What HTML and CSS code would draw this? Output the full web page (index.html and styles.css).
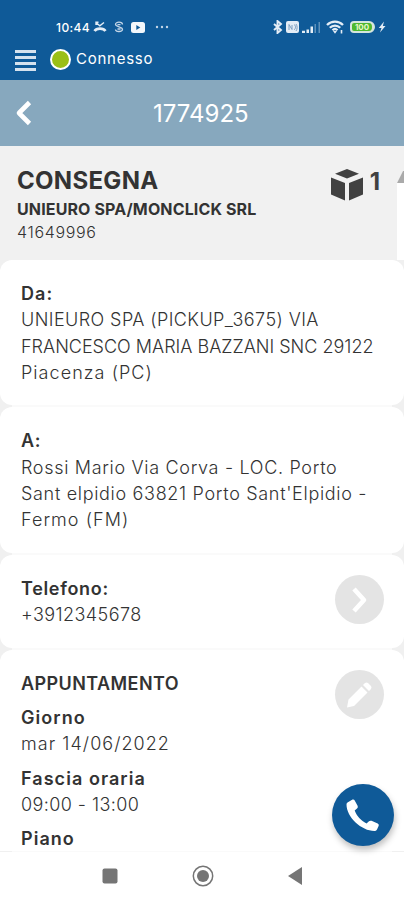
FILE: index.html
```
<!DOCTYPE html>
<html lang="it">
<head>
  <meta charset="UTF-8">
  <meta name="viewport" content="width=device-width, initial-scale=1.0">
  <title>Consegna 1774925</title>
  <link rel="stylesheet" href="styles.css">
</head>
<body>
  <div class="app">
    <header class="topbar">
      <div class="status">
        <span class="clock">10:44</span>
        <svg class="missed" width="14" height="12" viewBox="0 0 14 12" fill="none" stroke="#e4edf6" stroke-width="1.4">
          <path d="M3 1.500l3.800 3.300L11 1.500M3 4V1.300h2.500"/>
          <path d="M1.500 10C3.500 6.800 10.500 6.800 12.500 10" stroke-width="2.600"/>
        </svg>
        <svg class="sim" width="10" height="12" viewBox="0 0 10 12" fill="none" stroke="#c3d5e7" stroke-width="1.300">
          <path d="M8.500 3.500C8.500.5 1.500.5 1.500 3.300S8.500 5.500 8.500 8.200 1.500 11.500 1.500 8.500M3.500 3.700h3M3.500 8h3"/>
        </svg>
        <svg class="video" width="14" height="11" viewBox="0 0 14 11">
          <rect width="14" height="11" rx="2.500" fill="#f3f7fb"/>
          <path d="M5.300 3l4 2.500-4 2.500z" fill="#0f5a98"/>
        </svg>
        <svg class="more" width="14" height="4" viewBox="0 0 14 4" fill="#c3d5e7">
          <circle cx="2" cy="2" r="1.200"/><circle cx="7" cy="2" r="1.200"/><circle cx="12" cy="2" r="1.200"/>
        </svg>
        <div class="status-right">
          <svg width="11" height="14" viewBox="0 0 11 14" fill="none" stroke="#e4edf6" stroke-width="1.900">
            <path d="M2 4l7 6-3.500 3V1L9 4l-7 6"/>
          </svg>
          <svg width="13" height="12" viewBox="0 0 13 12">
            <rect width="13" height="12" rx="2" fill="#e4edf6"/>
            <path d="M3 9V3.500l3 5V4M8 3.500c2 1 2 4 0 5.500M10 3c1.500 2 1.500 5 0 7" fill="none" stroke="#7d9fc0"/>
          </svg>
          <svg width="19" height="12" viewBox="0 0 19 12">
            <path d="M0 9.800h3V12H0zM4.500 8.500h2.500V12H4.500zM8.500 5.500h2.500V12H8.500z" fill="#e4edf6"/>
            <path d="M12.500 3H14v9h-1.500zM16.500 1H18v11h-1.500z" fill="#5f91bb"/>
          </svg>
          <svg class="wifi" width="18" height="14" viewBox="0 0 18 14" fill="none" stroke="#e4edf6" stroke-width="2.300">
            <path d="M1 5c4.500-4.500 11.500-4.500 16 0M3.800 7.800c3-3 7.400-3 10.400 0M6.500 10.300c1.500-1.500 3.500-1.500 5 0"/>
            <path d="M7 11h4L9 13.800z" fill="#e4edf6" stroke="none"/>
            <path d="M15.500 10v3.500" stroke-width="1.600"/>
          </svg>
          <div class="battery">100</div>
          <svg width="8" height="12" viewBox="0 0 8 12" fill="#e4edf6"><path d="M6 .5L.8 7h2.700L2 11.500 7.500 5H4.800z"/></svg>
        </div>
      </div>
      <div class="connection">
        <div class="menu"><i></i><i></i><i></i><i></i></div>
        <span class="dot"></span>
        <span class="connection-label">Connesso</span>
      </div>
    </header>

    <nav class="titlebar">
      <svg class="back" width="18" height="26" viewBox="0 0 18 26" fill="none" stroke="#fff" stroke-width="4.600" stroke-linejoin="round">
        <path d="M14.500 2.500L4 13l10.500 10.500"/>
      </svg>
      <h1>1774925</h1>
    </nav>

    <main>
      <section class="summary">
        <div>
          <h2>CONSEGNA</h2>
          <div class="customer">UNIEURO SPA/MONCLICK SRL</div>
          <div class="code">41649996</div>
        </div>
        <div class="parcels">
          <svg width="34" height="34" viewBox="0 0 34 34" fill="#414141">
            <path d="M17 1L29 5.800 17 10.500 5 5.800zM1 9.500l14 5.500v17.500L1 26.500zM33 9.500L19 15v17.500l14-6z"/>
          </svg>
          <span>1</span>
        </div>
        <div class="scroll"></div>
      </section>

      <section class="card address">
        <h3 class="ls-l">Da:</h3>
        <p><span class="ls-s">UNIEURO SPA (PICKUP_3675) VIA</span><br>FRANCESCO MARIA BAZZANI SNC 29122<br><span class="ls-l">Piacenza (PC)</span></p>
      </section>

      <section class="card address">
        <h3 class="ls-m">A:</h3>
        <p class="ls-m">Rossi Mario Via Corva - LOC. Porto<br>Sant elpidio 63821 Porto Sant'Elpidio -<br><span class="ls-l">Fermo (FM)</span></p>
      </section>

      <section class="card phone">
        <div>
          <h3 class="ls-m">Telefono:</h3>
          <p class="ls-s">+3912345678</p>
        </div>
        <div class="round">
          <svg width="49" height="49" viewBox="0 0 49 49" fill="none" stroke="#fff" stroke-width="4.600" stroke-linejoin="round">
            <path d="M19 14l10 11L19 36"/>
          </svg>
        </div>
      </section>

      <section class="card appointment">
        <div>
          <h3 class="ls-s">APPUNTAMENTO</h3>
          <dl>
            <dt>Giorno</dt>
            <dd>mar 14/06/2022</dd>
            <dt>Fascia oraria</dt>
            <dd class="ls-s">09:00 - 13:00</dd>
            <dt>Piano</dt>
          </dl>
        </div>
        <div class="round">
          <svg width="49" height="49" viewBox="0 0 49 49" fill="#fff">
            <path d="M12 37.500l1.500-8L26.500 16.500l6 6L19 36zM28 15l2-2q1.500-1 3 0l3 3q1 1.500 0 3l-2 2z"/>
          </svg>
        </div>
      </section>
    </main>

    <div class="call">
      <svg width="62" height="62" viewBox="0 0 62 62" fill="#fff">
        <path d="M15.500 18.500l5-3q1.500-.5 2.200 1l3 5.500q.5 1.500-.7 2.500l-2.300 2c2 5.500 6.300 10 11.800 13l2.500-2.200q1-1 2.500-.5l6.200 2.700q1.500.8 1 2.300l-1.700 3.700q-.8 1.500-2.500 1.500C29.500 47 14.500 33 14.500 20.500q0-1.300 1-2z"/>
      </svg>
    </div>

    <footer class="android-nav">
      <svg width="16" height="16" viewBox="0 0 16 16"><rect x=".5" y=".5" width="15" height="15" rx="2" fill="#757575"/></svg>
      <svg width="22" height="22" viewBox="0 0 22 22"><circle cx="11" cy="11" r="9.700" fill="none" stroke="#757575" stroke-width="1.500"/><circle cx="11" cy="11" r="6" fill="#757575"/></svg>
      <svg width="14" height="18" viewBox="0 0 14 18"><path d="M14 0v18L0 9z" fill="#757575"/></svg>
    </footer>
  </div>
</body>
</html>
```
FILE: styles.css
```
* {
  box-sizing: border-box;
}

body {
  margin: 0;
  font-family: "Inter", sans-serif;
  color: #333;
}

h1, h2, h3, p, dl, dd {
  margin: 0;
}

svg {
  display: block;
  flex: none;
}

.app {
  position: relative;
  width: 404px;
  height: 900px;
  overflow: hidden;
  display: flex;
  flex-direction: column;
  background: #fff;
}

.topbar {
  height: 80px;
  padding-top: 19px;
  background: #0f5a98;
  color: #fff;
}

.status {
  display: flex;
  align-items: center;
  height: 16px;
  padding: 0 18px 0 56px;
}

.clock {
  width: 35px;
  font-size: 12px;
  font-weight: 500;
  letter-spacing: 0.4px;
}

.missed {
  margin-left: 2px;
}

.sim {
  margin-left: 7px;
}

.video {
  margin-left: 7px;
}

.more {
  margin-left: 10px;
}

.status-right {
  display: flex;
  align-items: center;
  gap: 3px;
  margin-left: auto;
}

.wifi {
  margin: 0 3px 0 2px;
}

.battery {
  width: 25px;
  height: 12px;
  border: 2px solid #d5e5dc;
  border-right-width: 3px;
  border-radius: 4px 6px 6px 4px;
  background: #4db82e;
  color: #e9f8c8;
  font-size: 8px;
  font-weight: 700;
  line-height: 8px;
  text-align: center;
}

.connection {
  display: flex;
  align-items: center;
  height: 22px;
  margin-top: 13px;
  padding-left: 15px;
}

.menu {
  display: flex;
  flex-direction: column;
  justify-content: space-between;
  width: 21px;
  height: 22px;
  margin-top: 3px;
}

.menu i {
  height: 3px;
  background: #d5e2ee;
}

.dot {
  width: 21px;
  height: 21px;
  margin: 1px 5px 0 14px;
  border: 2px solid #fff;
  border-radius: 50%;
  background: #9abf16;
}

.connection-label {
  margin-top: -2px;
  font-size: 15px;
  letter-spacing: 0.75px;
}

.titlebar {
  display: flex;
  align-items: center;
  height: 66px;
  padding-left: 15px;
  background: #87a8be;
  color: #fff;
}

.titlebar h1 {
  margin-left: 120px;
  font-size: 24px;
  font-weight: 400;
}

main {
  flex: 1;
  min-height: 0;
  overflow: hidden;
  background: linear-gradient(90deg, #f0f0f0 12px, #fafafa 12px, #fafafa 392px, #f0f0f0 392px);
}

.summary {
  position: relative;
  display: flex;
  justify-content: space-between;
  height: 114px;
  padding: 19px 24px 0 17px;
  background: #f1f1f1;
}

.summary h2 {
  font-size: 24px;
  line-height: 32px;
  letter-spacing: 0.3px;
}

.customer {
  font-size: 16px;
  font-weight: 700;
  line-height: 24px;
  letter-spacing: 0.13px;
}

.code {
  font-size: 16px;
  font-weight: 300;
  line-height: 22px;
  letter-spacing: 0.65px;
}

.parcels {
  display: flex;
  gap: 6px;
  padding-top: 3px;
  color: #414141;
  font-size: 24px;
  font-weight: 700;
  line-height: 28px;
}

/* arrow and track of the list scrollbar, cut by the screen edge */
.scroll {
  position: absolute;
  top: 25px;
  right: 0;
  width: 7px;
  height: 89px;
  background: #fff;
  border-top: 12px solid #aaa;
  clip-path: polygon(0 12px, 6px 0, 7px 0, 7px 100%, 0 100%);
}

.card {
  margin-bottom: 2px;
  padding: 21px 20px 0 21px;
  border-radius: 12px;
  background: #fff;
  font-size: 18px;
  line-height: 26.25px;
}

.card h3 {
  font-size: 18px;
  font-weight: 600;
}

.card p, .card dd {
  font-weight: 300;
  white-space: nowrap;
}

.address {
  height: 145.4px;
}

.ls-s {
  letter-spacing: 0.42px;
}

.ls-m {
  letter-spacing: 0.68px;
}

.ls-l {
  letter-spacing: 1.05px;
}

.phone {
  display: flex;
  justify-content: space-between;
  height: 93px;
}

.round {
  width: 49px;
  height: 49px;
  margin-top: -1px;
  border-radius: 50%;
  background: #e4e4e4;
}

.appointment {
  display: flex;
  justify-content: space-between;
  height: 201px;
  border-radius: 12px 12px 0 0;
}

.appointment dl {
  letter-spacing: 1.05px;
}

.appointment dt {
  margin-top: 8px;
  font-weight: 600;
}

.call {
  position: absolute;
  left: 332px;
  top: 784px;
  width: 62px;
  height: 62px;
  border-radius: 50%;
  background: #0f5a98;
  box-shadow: 1px 4px 6px rgba(0, 0, 0, 0.25);
}

.android-nav {
  display: flex;
  align-items: center;
  height: 48px;
  padding-left: 102px;
  background: #fff;
}

.android-nav svg + svg {
  margin-left: 74px;
}
```
